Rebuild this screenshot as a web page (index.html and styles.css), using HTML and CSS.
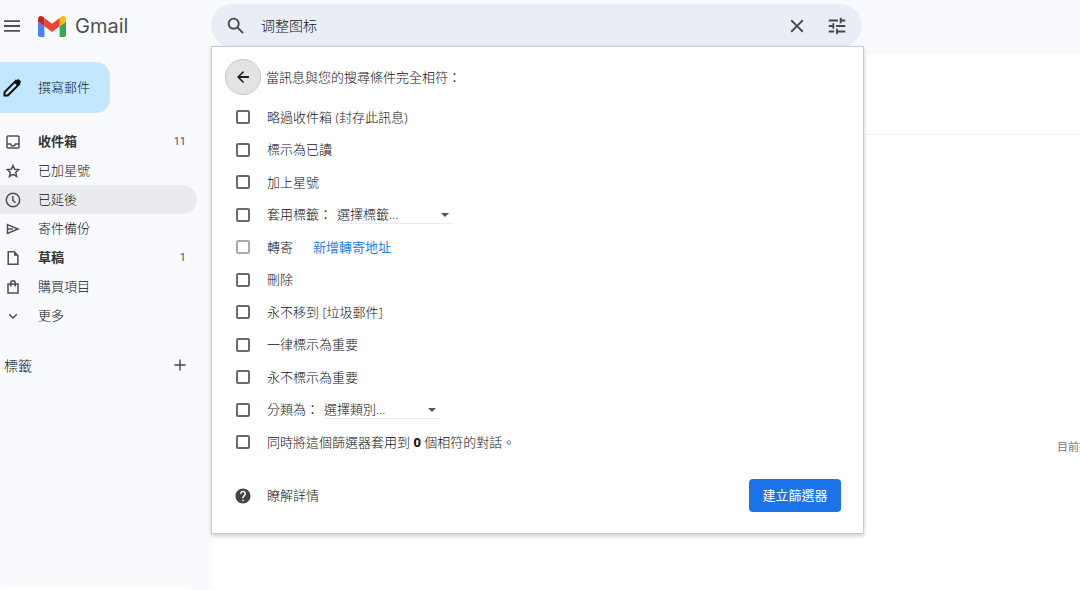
FILE: index.html
```html
<!DOCTYPE html>
<html lang="zh-Hant">
<head>
    <meta charset="UTF-8">
    <meta name="viewport" content="width=device-width, initial-scale=1.0">
    <title>Gmail</title>
    <link rel="stylesheet" href="styles.css">
</head>

<body>
    <div class="app">
        <header class="topbar">
            <div class="brand">
                <button type="button" class="icon-btn" aria-label="主選單">
                    <svg width="18" height="18" viewBox="0 0 18 18"><path d="M1 4.200h16M1 9h16M1 13.800h16" stroke="#4d5052" stroke-width="1.800"/></svg>
                </button>
                <svg class="logo" width="28" height="21" viewBox="52 42 88 66">
                    <path fill="#4285f4" d="M58 108h14V74L52 59v43c0 3.320 2.690 6 6 6"/>
                    <path fill="#34a853" d="M120 108h14c3.320 0 6-2.690 6-6V59l-20 15"/>
                    <path fill="#fbbc04" d="M120 48v26l20-15v-8c0-7.420-8.470-11.650-14.400-7.200"/>
                    <path fill="#ea4335" d="M72 74V48l24 18 24-18v26L96 92"/>
                    <path fill="#c5221f" d="M52 51v8l20 15V48l-5.600-4.200c-5.940-4.450-14.400-.22-14.400 7.200"/>
                </svg>
                <span class="brand-name">Gmail</span>
            </div>

            <div class="search">
                <form class="search-bar">
                    <button type="submit" class="icon-btn" aria-label="搜尋">
                        <svg width="22" height="22" viewBox="0 0 24 24" fill="#444746"><path d="M20.490 19l-5.730-5.730C15.530 12.200 16 10.910 16 9.500A6.500 6.500 0 1 0 9.500 16c1.410 0 2.700-.47 3.770-1.240L19 20.490 20.490 19zM5 9.500C5 7.010 7.010 5 9.500 5S14 7.010 14 9.500 11.990 14 9.500 14 5 11.990 5 9.500z"/></svg>
                    </button>
                    <input type="text" class="search-input" aria-label="搜尋郵件" value="调整图标">
                    <button type="button" class="icon-btn" aria-label="清除搜尋">
                        <svg width="22" height="22" viewBox="0 0 24 24" fill="#444746"><path d="M19 6.410L17.590 5 12 10.590 6.410 5 5 6.410 10.590 12 5 17.590 6.410 19 12 13.410 17.590 19 19 17.590 13.410 12z"/></svg>
                    </button>
                    <button type="button" class="icon-btn" aria-label="顯示搜尋選項">
                        <svg width="22" height="22" viewBox="0 0 24 24" fill="#444746"><path d="M3 17v2h6v-2H3zM3 5v2h10V5H3zm10 16v-2h8v-2h-8v-2h-2v6h2zM7 9v2H3v2h4v2h2V9H7zm14 4v-2H11v2h10zm-6-4h2V7h4V5h-4V3h-2v6z"/></svg>
                    </button>
                </form>

                <form class="filter-panel">
                    <div class="filter-header">
                        <button type="button" class="back-btn" aria-label="返回">
                            <svg width="18" height="18" viewBox="0 0 24 24" fill="#222"><path d="M20 10.800H8.200l5.300-5.300L12 4l-8 8 8 8 1.500-1.500-5.300-5.300H20z"/></svg>
                        </button>
                        <span>當訊息與您的搜尋條件完全相符：</span>
                    </div>
                    <ul class="filter-list">
                        <li><input type="checkbox" id="skip"><label for="skip">略過收件箱 (封存此訊息)</label></li>
                        <li><input type="checkbox" id="read"><label for="read">標示為已讀</label></li>
                        <li><input type="checkbox" id="star"><label for="star">加上星號</label></li>
                        <li class="has-select">
                            <input type="checkbox" id="label"><label for="label">套用標籤：</label>
                            <select aria-label="選擇標籤"><option>選擇標籤...</option></select>
                        </li>
                        <li>
                            <input type="checkbox" id="forward" disabled><label for="forward">轉寄</label>
                            <a href="#" class="forward-link">新增轉寄地址</a>
                        </li>
                        <li><input type="checkbox" id="delete"><label for="delete">刪除</label></li>
                        <li><input type="checkbox" id="spam"><label for="spam">永不移到 [垃圾郵件]</label></li>
                        <li><input type="checkbox" id="important"><label for="important">一律標示為重要</label></li>
                        <li><input type="checkbox" id="unimportant"><label for="unimportant">永不標示為重要</label></li>
                        <li class="has-select">
                            <input type="checkbox" id="category"><label for="category">分類為：</label>
                            <select aria-label="選擇類別"><option>選擇類別...</option></select>
                        </li>
                        <li><input type="checkbox" id="apply"><label for="apply">同時將這個篩選器套用到 <b>0</b> 個相符的對話。</label></li>
                    </ul>
                    <div class="filter-footer">
                        <a href="#" class="help-link">
                            <svg width="18" height="18" viewBox="0 0 24 24" fill="#444"><path d="M12 2C6.480 2 2 6.480 2 12s4.480 10 10 10 10-4.480 10-10S17.520 2 12 2zm1 17h-2v-2h2v2zm2.070-7.750l-.9.920C13.450 12.900 13 13.500 13 15h-2v-.5c0-1.100.45-2.100 1.170-2.830l1.240-1.260c.37-.36.59-.86.59-1.410 0-1.100-.9-2-2-2s-2 .9-2 2H8c0-2.210 1.790-4 4-4s4 1.790 4 4c0 .88-.36 1.680-.93 2.250z"/></svg>
                            <span>瞭解詳情</span>
                        </a>
                        <button type="submit" class="create-btn">建立篩選器</button>
                    </div>
                </form>
            </div>
        </header>

        <aside class="sidebar">
            <button type="button" class="compose">
                <svg width="24" height="24" viewBox="0 0 24 24"><path d="M4.500 16.200L15.800 4.900l3.300 3.300L7.800 19.500H4.500z" fill="none" stroke="#111" stroke-width="2"/><path d="M14 6.500L17 3.600q1-.9 2 0l1.500 1.500q.9 1 0 2L17.500 10z" fill="#111"/></svg>
                <span>撰寫郵件</span>
            </button>
            <nav>
                <ul class="nav-list">
                    <li><a href="#" class="unread">
                        <svg viewBox="0 0 16 16"><rect x="2" y="2" width="12" height="12" rx="1"/><path d="M2 10h3.500q.6 2 2.500 2t2.500-2H14"/></svg>
                        <span>收件箱</span><span class="count">11</span>
                    </a></li>
                    <li><a href="#">
                        <svg viewBox="0 0 16 16"><path d="M8 2.600l1.700 3.700 4 .4-3 2.700.9 4L8 11.300l-3.600 2.100.9-4-3-2.700 4-.4z"/></svg>
                        <span>已加星號</span>
                    </a></li>
                    <li><a href="#" class="active">
                        <svg viewBox="0 0 16 16"><circle cx="8" cy="8" r="6.700"/><path d="M7.800 4v4.200l2.800 2.600"/></svg>
                        <span>已延後</span>
                    </a></li>
                    <li><a href="#">
                        <svg viewBox="0 0 16 16"><path d="M2.500 3.600L13 8 2.500 12.400zM2.500 8H8"/></svg>
                        <span>寄件備份</span>
                    </a></li>
                    <li><a href="#" class="unread">
                        <svg viewBox="0 0 16 16"><path d="M3.200 1.800h6l3.700 3.700v8.700H3.200z"/><path d="M9 1.800v4h4z" fill="#4d5052" stroke="none"/></svg>
                        <span>草稿</span><span class="count">1</span>
                    </a></li>
                    <li><a href="#">
                        <svg viewBox="0 0 16 16"><path d="M3 5h10v9H3zM5.700 7.500V4q0-2.300 2.300-2.300T10.300 4v3.500"/></svg>
                        <span>購買項目</span>
                    </a></li>
                    <li><a href="#">
                        <svg viewBox="0 0 16 16"><path d="M4.200 6.300L8 10l3.800-3.700"/></svg>
                        <span>更多</span>
                    </a></li>
                </ul>
            </nav>
            <div class="labels">
                <h3>標籤</h3>
                <button type="button" class="icon-btn" aria-label="建立新標籤">
                    <svg width="12" height="12" viewBox="0 0 12 12"><path d="M6 .5v11M.5 6h11" stroke="#444746" stroke-width="1.400"/></svg>
                </button>
            </div>
            <div class="side-card"></div>
        </aside>

        <main class="content">
            <div class="toolbar"></div>
            <p class="empty">目前找不到任何郵件</p>
        </main>
    </div>
</body>
</html>
```
FILE: styles.css
```css
* {
    box-sizing: border-box;
}

body {
    margin: 0;
    font-family: "Open Sans", "Noto Sans CJK TC", sans-serif;
    font-size: 13px;
    font-weight: 300;
    color: #111;
    background-color: #f8fafe;
}

ul {
    list-style: none;
    margin: 0;
    padding: 0;
}

a {
    color: inherit;
    text-decoration: none;
}

b {
    font-weight: 700;
}

button, input, select {
    font: inherit;
    color: inherit;
}

button {
    border: none;
    padding: 0;
    background: none;
    cursor: pointer;
}

svg {
    display: block;
    flex: none;
}

span, label, .forward-link {
    padding-bottom: 2px;
}

.app {
    display: grid;
    grid-template-columns: 211px minmax(0, 1fr);
    grid-template-rows: 55px 1fr;
    height: 100vh;
    overflow: hidden;
}

/* top bar */
.topbar {
    grid-column: 1 / 3;
    display: grid;
    grid-template-columns: 211px minmax(0, 1fr);
    align-items: start;
}

.brand {
    display: flex;
    align-items: center;
    height: 52px;
    padding-left: 3px;
}

.logo {
    margin: 0 9px 0 17px;
}

.brand-name {
    padding: 0;
    font-family: Inter, sans-serif;
    font-size: 20px;
    font-weight: 400;
    line-height: 24px;
    color: #505050;
}

.search {
    position: relative;
    max-width: 653px;
    padding-top: 4px;
}

.search-bar {
    display: flex;
    align-items: center;
    gap: 18px;
    height: 43px;
    margin-right: 2px;
    padding: 0 14px;
    border-radius: 22px;
    background-color: #e9eef6;
}

.search-input {
    flex: 1;
    min-width: 0;
    padding: 0 0 2px;
    margin-left: -4px;
    border: none;
    outline: none;
    background: none;
    font-family: "Open Sans", "Noto Sans CJK SC", sans-serif;
    font-size: 14px;
}

/* filter panel */
.filter-panel {
    position: absolute;
    top: 46px;
    left: 0;
    right: 0;
    padding: 12px 22px 21px 13px;
    border: 1px solid #c8cacc;
    background-color: #fff;
    box-shadow: 0 2px 4px rgba(0, 0, 0, 0.2);
}

.filter-header {
    display: flex;
    align-items: center;
    gap: 5px;
    margin-bottom: 6px;
}

.back-btn {
    display: flex;
    align-items: center;
    justify-content: center;
    width: 36px;
    height: 36px;
    border: 1px solid #c6c6ca;
    border-radius: 50%;
    background-color: #e3e3e3;
}

.filter-list li {
    display: flex;
    align-items: center;
    height: 32px;
    padding-left: 11px;
}

.filter-list li:nth-child(even) {
    height: 33px;
}

input[type="checkbox"] {
    appearance: none;
    flex: none;
    width: 14px;
    height: 14px;
    margin: 0 17px 0 0;
    border: 2px solid #6a6a6a;
    border-radius: 2px;
}

input[type="checkbox"]:disabled {
    border-color: #aaa;
}

select {
    appearance: none;
    width: 116px;
    height: 19px;
    margin-left: 5px;
    padding: 0 0 1px;
    border: none;
    border-bottom: 1px solid #ebebeb;
    border-radius: 0;
    background: none;
}

/* dropdown arrow */
.has-select::after {
    content: "";
    margin-left: -12px;
    border: 4px solid transparent;
    border-top-color: #555;
    border-bottom: none;
    pointer-events: none;
}

.forward-link {
    margin-left: 20px;
    font-weight: 400;
    color: #2b7de9;
}

.filter-footer {
    display: flex;
    align-items: center;
    justify-content: space-between;
    margin-top: 21px;
}

.help-link {
    display: flex;
    align-items: center;
    gap: 15px;
    padding-left: 9px;
}

.create-btn {
    width: 92px;
    height: 33px;
    padding-bottom: 2px;
    border-radius: 4px;
    background-color: #1a73e8;
    font-weight: 400;
    color: #fff;
}

/* sidebar */
.sidebar {
    display: flex;
    flex-direction: column;
    padding-top: 7px;
}

.compose {
    display: flex;
    align-items: center;
    gap: 14px;
    width: 110px;
    height: 51px;
    border-radius: 0 14px 14px 0;
    background-color: #c2e7ff;
    color: #001d35;
}

.nav-list {
    margin-top: 14px;
}

.nav-list a {
    display: flex;
    align-items: center;
    gap: 17px;
    height: 29px;
    margin-right: 14px;
    padding: 0 11px 0 5px;
    border-radius: 0 15px 15px 0;
}

.nav-list svg {
    width: 16px;
    height: 16px;
    fill: none;
    stroke: #4d5052;
    stroke-width: 1.5;
}

.nav-list .active {
    background-color: #eaebef;
}

.nav-list .unread {
    font-weight: bold;
    color: #333;
}

.count {
    margin-left: auto;
    padding: 0;
    font-family: Roboto, sans-serif;
    font-size: 11px;
    font-weight: normal;
    color: #555;
}

.labels {
    display: flex;
    align-items: center;
    justify-content: space-between;
    margin-top: 25px;
    padding: 0 25px 0 4px;
}

.labels h3 {
    margin: 0;
    font-size: 14px;
    font-weight: inherit;
}

.side-card {
    width: 192px;
    height: 5px;
    margin-top: auto;
    border-radius: 14px 14px 0 0;
    background-color: #fff;
}

/* message list */
.content {
    overflow: hidden;
    background-color: #fff;
}

.toolbar {
    height: 80px;
    border-bottom: 1px solid #f1f2f4;
}

.empty {
    margin: 304px 0 0;
    padding-left: 846px;
    font-size: 11px;
    font-weight: 400;
    line-height: 16px;
    white-space: nowrap;
    color: #777;
}
```
